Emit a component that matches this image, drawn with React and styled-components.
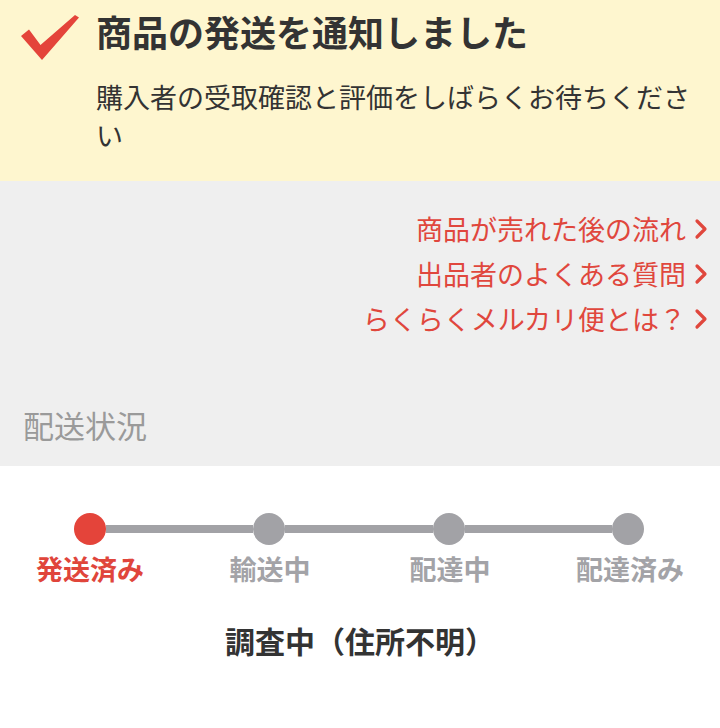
import React from 'react';
import styled, { createGlobalStyle } from 'styled-components';

const GlobalStyle = createGlobalStyle`
  html, body {
    margin: 0;
    padding: 0;
    background: #ffffff;
    font-family: "Noto Sans CJK JP", "Noto Sans", sans-serif;
  }
`;

const Page = styled.div`
  width: 720px;
  display: flex;
  flex-direction: column;
`;

const Notice = styled.section`
  background: #fef6cf;
  display: flex;
  padding: 8px 0 27px;
`;

const CheckCol = styled.div`
  width: 96px;
  flex-shrink: 0;
  padding: 6px 0 0 20px;
  box-sizing: border-box;
`;

const NoticeText = styled.div`
  display: flex;
  flex-direction: column;
  width: 608px;
  gap: 24px;
`;

const Title = styled.h1`
  margin: 0;
  font-size: 36px;
  line-height: 46px;
  font-weight: 700;
  color: #333333;
`;

const Sub = styled.p`
  margin: 0;
  font-size: 27px;
  line-height: 38px;
  color: #333333;
`;

const Info = styled.section`
  background: #efefef;
  display: flex;
  flex-direction: column;
  padding: 25px 0 21px;
`;

const Links = styled.div`
  display: flex;
  flex-direction: column;
  align-items: flex-end;
  padding-right: 12px;
`;

const LinkRow = styled.a`
  display: flex;
  align-items: center;
  gap: 8px;
  font-size: 27px;
  line-height: 45px;
  color: #e0473d;
  text-decoration: none;
`;

const SectionLabel = styled.h2`
  margin: 64px 0 0 23px;
  font-size: 31px;
  line-height: 40px;
  font-weight: 400;
  color: #9a9a9a;
`;

const Shipping = styled.section`
  background: #ffffff;
  padding-top: 47px;
  display: flex;
  flex-direction: column;
`;

const Track = styled.div`
  display: flex;
  align-items: center;
  padding: 0 76px 0 74px;
`;

const Dot = styled.span`
  width: 32px;
  height: 32px;
  border-radius: 50%;
  flex-shrink: 0;
  background: ${(p) => (p.$active ? '#e4443a' : '#a2a2a6')};
`;

const Line = styled.span`
  flex: 1;
  height: 8px;
  background: #a2a2a6;
`;

const Labels = styled.div`
  display: grid;
  grid-template-columns: repeat(4, 1fr);
  margin-top: 4px;
`;

const StepLabel = styled.span`
  text-align: center;
  font-size: 27px;
  line-height: 40px;
  font-weight: 700;
  color: ${(p) => (p.$active ? '#e0453b' : '#a3a3a7')};
`;

const Status = styled.p`
  margin: 31px 0 0;
  text-align: center;
  font-size: 30px;
  line-height: 40px;
  font-weight: 700;
  color: #333333;
`;

function Check() {
  return (
    <svg width="60" height="48" viewBox="0 0 60 48">
      <path d="M1 22 L9 15.5 L20.5 31 L55 1 L59 3.5 L22 46 Z" fill="#e4443a" />
    </svg>
  );
}

function Chevron() {
  return (
    <svg width="14" height="22" viewBox="0 0 14 22">
      <path d="M3 3 L11 11 L3 19" fill="none" stroke="#e0473d" strokeWidth="3.2" strokeLinecap="round" strokeLinejoin="round" />
    </svg>
  );
}

const links = ['商品が売れた後の流れ', '出品者のよくある質問', 'らくらくメルカリ便とは？'];
const steps = ['発送済み', '輸送中', '配達中', '配達済み'];

export default function App() {
  return (
    <Page>
      <GlobalStyle />
      <Notice>
        <CheckCol>
          <Check />
        </CheckCol>
        <NoticeText>
          <Title>商品の発送を通知しました</Title>
          <Sub>購入者の受取確認と評価をしばらくお待ちください</Sub>
        </NoticeText>
      </Notice>
      <Info>
        <Links>
          {links.map((l) => (
            <LinkRow key={l} href="#">
              {l}
              <Chevron />
            </LinkRow>
          ))}
        </Links>
        <SectionLabel>配送状況</SectionLabel>
      </Info>
      <Shipping>
        <Track>
          {steps.map((s, i) => (
            <React.Fragment key={s}>
              {i > 0 && <Line />}
              <Dot $active={i === 0} />
            </React.Fragment>
          ))}
        </Track>
        <Labels>
          {steps.map((s, i) => (
            <StepLabel key={s} $active={i === 0}>{s}</StepLabel>
          ))}
        </Labels>
        <Status>調査中（住所不明）</Status>
      </Shipping>
    </Page>
  );
}
